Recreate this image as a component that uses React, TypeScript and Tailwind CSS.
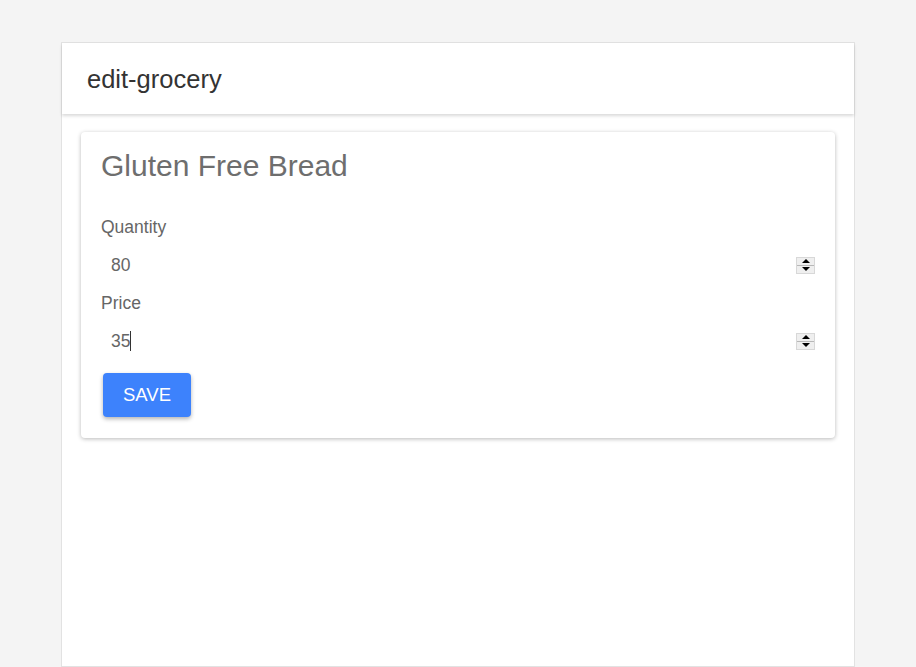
import React from "react";

function Spinner() {
  return (
    <div className="flex flex-col w-[19px] h-[17px] bg-[#efefef] border border-[#d8d8d8] shrink-0">
      <div className="flex-1 flex items-center justify-center border-b border-[#b8b8b8]">
        <div className="w-0 h-0 border-l-[4px] border-r-[4px] border-b-[4px] border-l-transparent border-r-transparent border-b-black" />
      </div>
      <div className="flex-1 flex items-center justify-center">
        <div className="w-0 h-0 border-l-[4px] border-r-[4px] border-t-[4px] border-l-transparent border-r-transparent border-t-black" />
      </div>
    </div>
  );
}

function NumberField({ label, value, caret }: { label: string; value: string; caret?: boolean }) {
  return (
    <div>
      <div className="h-[24px] flex items-center text-[17.5px] text-[#666]">{label}</div>
      <div className="h-[52px] flex items-center justify-between pl-[10px]">
        <span className="text-[17.5px] text-[#666] flex items-center">
          {value}
          {caret && <span className="inline-block w-px h-[20px] bg-[#333]" />}
        </span>
        <Spinner />
      </div>
    </div>
  );
}

export default function App() {
  return (
    <div className="min-h-[667px] bg-[#f4f4f4] pt-[42px] px-[61px] font-['Liberation_Sans',Arial,sans-serif]">
      <div className="bg-white border border-[#e2e2e2] min-h-[625px]">
        <div className="h-[71px] flex items-center px-[25px] shadow-[0_2px_3px_rgba(0,0,0,0.15)] relative">
          <h1 className="text-[25.5px] text-[#333] mt-[2px]">edit-grocery</h1>
        </div>
        <div className="px-[19px] pt-[18px]">
          <div className="bg-white rounded-[4px] shadow-[0_1px_4px_rgba(0,0,0,0.28)] px-[20px] pt-[17px] pb-[21px]">
            <h2 className="text-[30px] text-[#6e6e6e] leading-[34px] mb-[32px]">Gluten Free Bread</h2>
            <NumberField label="Quantity" value="80" />
            <NumberField label="Price" value="35" caret />
            <button className="mt-[6px] ml-[2px] w-[88px] h-[44px] rounded-[4px] bg-[#3d82fc] text-white text-[18.5px] shadow-[0_2px_4px_rgba(0,0,0,0.3)]">
              SAVE
            </button>
          </div>
        </div>
      </div>
    </div>
  );
}
